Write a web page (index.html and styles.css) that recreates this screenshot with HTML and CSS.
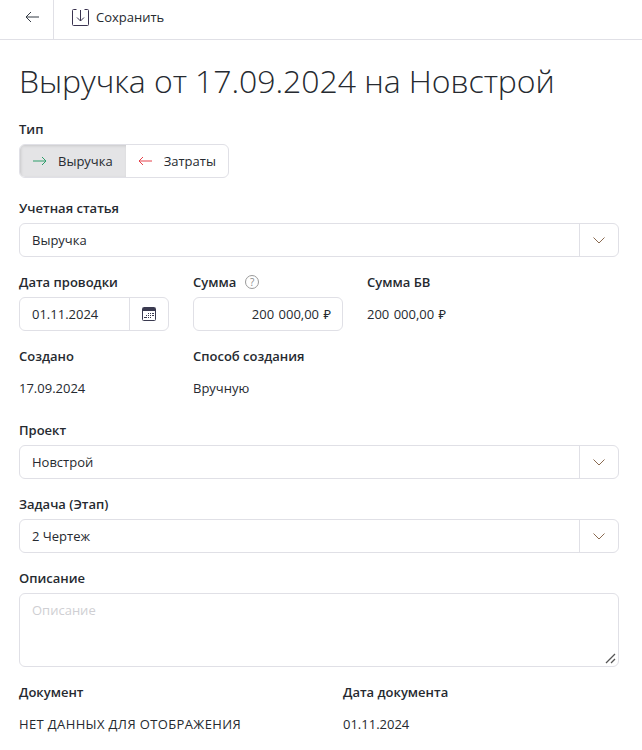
FILE: index.html
```html
<!DOCTYPE html>
<html lang="ru">
<head>
    <meta charset="UTF-8">
    <title>Выручка от 17.09.2024 на Новстрой</title>
    <link rel="stylesheet" href="styles.css">
</head>
<body>
    <header class="toolbar">
        <button class="tool-back" type="button" aria-label="Назад">
            <svg width="14" height="12" viewBox="0 0 14 12" fill="none" stroke="#333a44" stroke-width="1"><path d="M1 6h13M6 1L1 6l5 5"/></svg>
        </button>
        <button class="tool-save" type="button">
            <svg width="17" height="17" viewBox="0 0 17 17" fill="none" stroke="#3a3350" stroke-width="1"><path d="M4.500.5h-3a1 1 0 0 0-1 1v14a1 1 0 0 0 1 1h14a1 1 0 0 0 1-1v-14a1 1 0 0 0-1-1h-3"/><path d="M8.500 1v11M5 8.500l3.500 3.500L12 8.500"/></svg>
            Сохранить
        </button>
    </header>

    <main class="page">
        <h1>Выручка от 17.09.2024 на Новстрой</h1>

        <div class="field field-type">
            <label>Тип</label>
            <div class="segmented">
                <div class="segment active">
                    <svg width="14" height="10" viewBox="0 0 14 10" fill="none" stroke="#2e9e6b"><path d="M0 5h13M9 1l4 4-4 4"/></svg>
                    Выручка
                </div>
                <div class="segment">
                    <svg width="14" height="10" viewBox="0 0 14 10" fill="none" stroke="#e5414b"><path d="M14 5H1M5 1L1 5l4 4"/></svg>
                    Затраты
                </div>
            </div>
        </div>

        <div class="field field-account">
            <label>Учетная статья</label>
            <div class="select">
                <span class="select-value">Выручка</span>
                <span class="select-btn"><svg width="12" height="7" viewBox="0 0 12 7" fill="none" stroke="#8a6a50"><path d="M.5.5L6 6 11.500.5"/></svg></span>
            </div>
        </div>

        <div class="row row-amounts">
            <div class="field">
                <label>Дата проводки</label>
                <div class="select date">
                    <span class="select-value">01.11.2024</span>
                    <span class="select-btn">
                        <svg width="14" height="14" viewBox="0 0 14 14" fill="none"><rect x=".5" y=".5" width="13" height="13" rx="1" stroke="#3a3a50"/><path d="M1 1h12v3H1z" fill="#3a3a50"/><path d="M6 6.500h1M8 6.500h1M10 6.500h2M4 8.500h1M6 8.500h1M8 8.500h1M10 8.500h2M2 10.500h3M6 10.500h1M8 10.500h1" stroke="#3a3a50"/></svg>
                    </span>
                </div>
            </div>
            <div class="field">
                <label>Сумма <span class="hint">?</span></label>
                <div class="input-amount">200 000,00 ₽</div>
            </div>
            <div class="field">
                <label>Сумма БВ</label>
                <div class="static static-money">200 000,00 ₽</div>
            </div>
        </div>

        <div class="row row-info">
            <div class="field">
                <label>Создано</label>
                <div class="static">17.09.2024</div>
            </div>
            <div class="field">
                <label>Способ создания</label>
                <div class="static">Вручную</div>
            </div>
        </div>

        <div class="field field-project">
            <label>Проект</label>
            <div class="select">
                <span class="select-value">Новстрой</span>
                <span class="select-btn"><svg width="12" height="7" viewBox="0 0 12 7" fill="none" stroke="#8a6a50"><path d="M.5.5L6 6 11.500.5"/></svg></span>
            </div>
        </div>

        <div class="field field-task">
            <label>Задача (Этап)</label>
            <div class="select">
                <span class="select-value">2 Чертеж</span>
                <span class="select-btn"><svg width="12" height="7" viewBox="0 0 12 7" fill="none" stroke="#8a6a50"><path d="M.5.5L6 6 11.500.5"/></svg></span>
            </div>
        </div>

        <div class="field field-descr">
            <label>Описание</label>
            <div class="textarea">
                Описание
                <svg class="resizer" width="11" height="11" viewBox="0 0 11 11" fill="none" stroke="#555" stroke-width="1.300"><path d="M1 10L10 1M6 10l4-4"/></svg>
            </div>
        </div>

        <div class="row row-doc">
            <div class="field">
                <label>Документ</label>
                <div class="static static-caps">НЕТ ДАННЫХ ДЛЯ ОТОБРАЖЕНИЯ</div>
            </div>
            <div class="field">
                <label>Дата документа</label>
                <div class="static">01.11.2024</div>
            </div>
        </div>
    </main>
</body>
</html>
```

FILE: styles.css
```css
:root {
    --border-color: #e0e0e6;
    --text-color: #262a30;
    --border-radius: 6px;
}

html, body {
    height: 100%;
}

body {
    font-family: 'Open Sans', 'Noto Sans', sans-serif;
    font-size: 13px;
    line-height: 18px;
    color: var(--text-color);
    background-color: white;
    margin: 0;
    overflow: hidden;
}

.toolbar {
    display: flex;
    height: 39px;
    border-bottom: 1px solid var(--border-color);
}

.toolbar button {
    display: flex;
    align-items: center;
    background: none;
    border: none;
    padding: 0;
    font: inherit;
    color: inherit;
}

.toolbar .tool-back {
    width: 54px;
    border-right: 1px solid var(--border-color);
    padding: 0 0 6px 25px;
}

.toolbar .tool-save {
    gap: 7px;
    padding: 0 0 5px 18px;
}

.page {
    padding: 0 23px 0 19px;
}

h1 {
    font-size: 32px;
    line-height: 44px;
    font-weight: 300;
    letter-spacing: -0.06px;
    margin: 19px 0 0;
}

label {
    display: flex;
    align-items: center;
    gap: 9px;
    font-weight: 600;
    height: 18px;
    margin-bottom: 6px;
}

.field-type {
    margin-top: 17px;
}

.field-account {
    margin-top: 21px;
}

.field-project {
    margin-top: 16px;
}

.field-task {
    margin-top: 16px;
}

.field-descr {
    margin-top: 16px;
}

.segmented {
    display: inline-flex;
    box-sizing: border-box;
    height: 34px;
    border: 1px solid var(--border-color);
    border-radius: var(--border-radius);
    overflow: hidden;
}

.segment {
    display: flex;
    align-items: center;
    gap: 12px;
    padding: 0 12px;
}

.segment.active {
    gap: 11px;
    padding: 0 13px;
    background-color: #e4e4e6;
    box-shadow: inset 1px 1px 3px rgba(0,0,0,0.12);
}

.select {
    display: flex;
    height: 34px;
    border: 1px solid var(--border-color);
    border-radius: var(--border-radius);
    box-sizing: border-box;
}

.select-value {
    flex: 1;
    padding-left: 12px;
    line-height: 32px;
}

.select-btn {
    width: 38px;
    display: flex;
    align-items: center;
    justify-content: center;
    border-left: 1px solid var(--border-color);
}

.row {
    display: grid;
    grid-template-columns: 150px 150px 1fr;
    column-gap: 24px;
}

.row-amounts {
    margin-top: 16px;
}

.row-info {
    margin-top: 16px;
}

.row-doc {
    grid-template-columns: 300px 1fr;
    column-gap: 24px;
    margin-top: 16px;
}

.input-amount {
    height: 34px;
    box-sizing: border-box;
    border: 1px solid var(--border-color);
    border-radius: var(--border-radius);
    padding-right: 11px;
    text-align: right;
    line-height: 32px;
    word-spacing: 1px;
}

.static {
    line-height: 34px;
}

.static-money {
    word-spacing: 1px;
}

.static-caps {
    letter-spacing: 0.37px;
}

.hint {
    display: inline-block;
    width: 12px;
    height: 12px;
    border: 1px solid #9a9a9a;
    border-radius: 50%;
    font-size: 10px;
    line-height: 12px;
    font-weight: 400;
    text-align: center;
    color: #8a8a8a;
}

.textarea {
    position: relative;
    height: 74px;
    box-sizing: border-box;
    border: 1px solid var(--border-color);
    border-radius: var(--border-radius);
    padding: 7px 12px;
    color: #cfcfd3;
}

.resizer {
    position: absolute;
    right: 2px;
    bottom: 2px;
}
```
